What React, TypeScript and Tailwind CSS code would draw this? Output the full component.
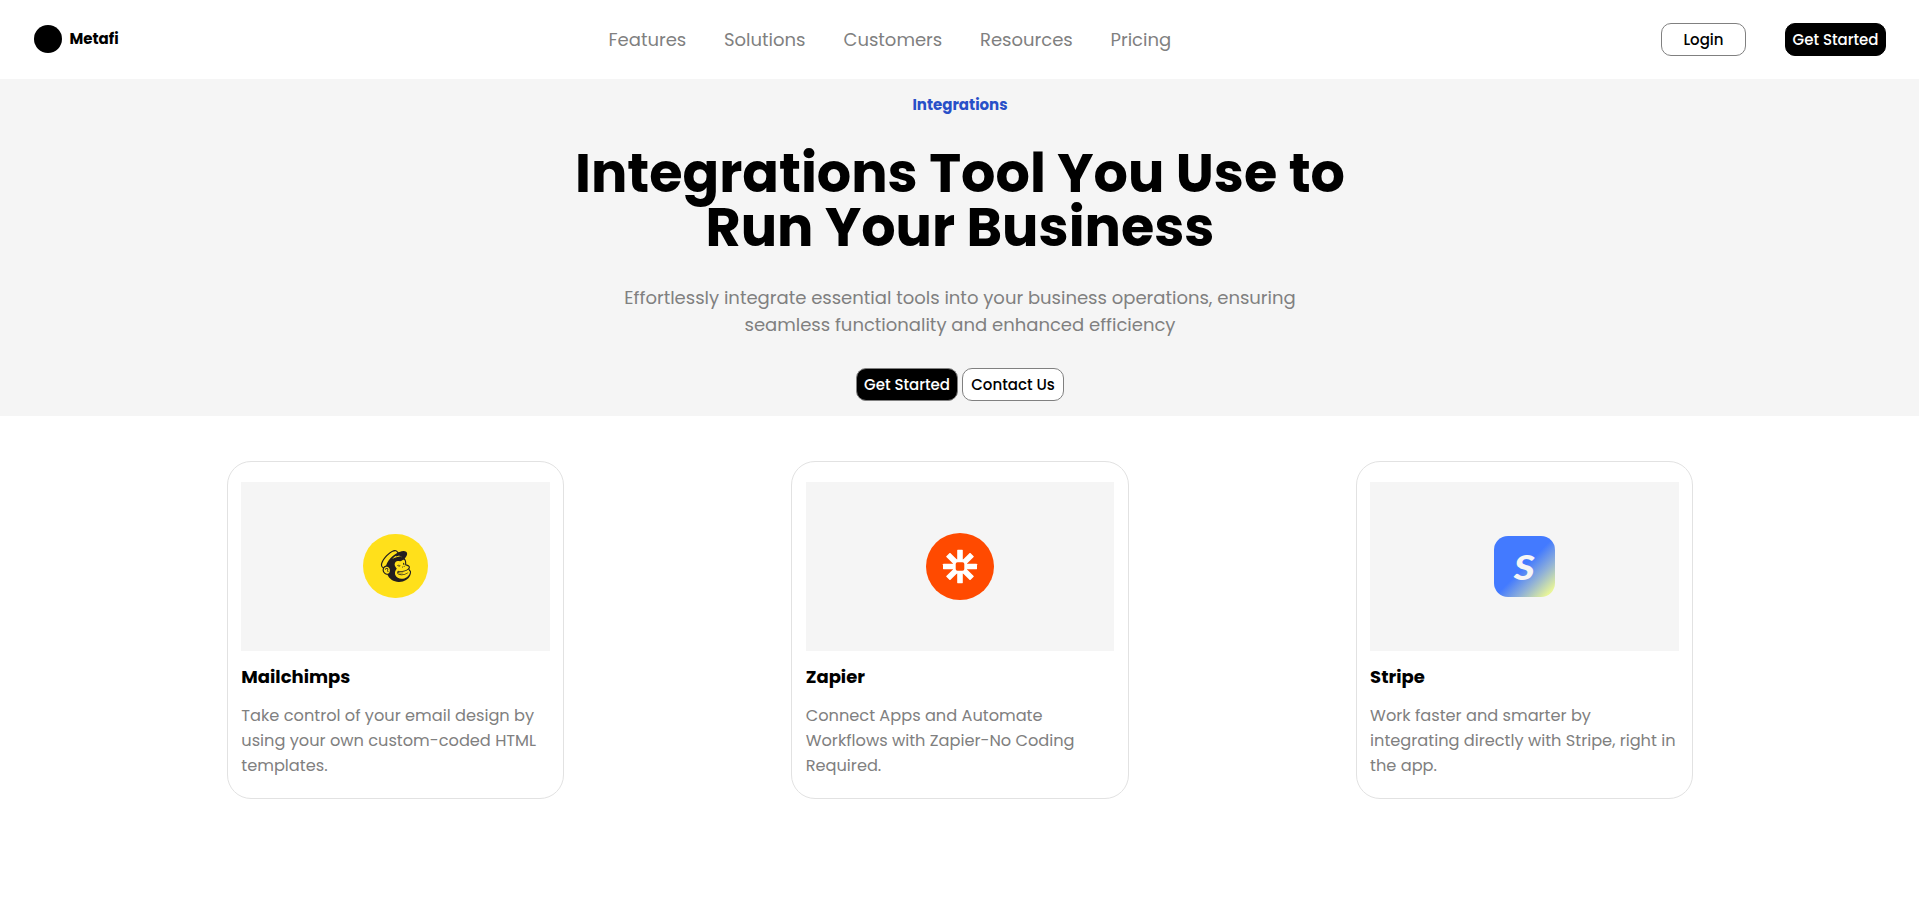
import type { ReactNode } from "react";
import { SiMailchimp } from "react-icons/si";

const navLinks = [
  { text: "Features", className: "w-[115.5px]" },
  { text: "Solutions", className: "w-[119.5px]" },
  { text: "Customers", className: "w-[136.5px]" },
  { text: "Resources", className: "w-[130.5px]" },
  { text: "Pricing", className: "w-[62px]" },
];

function MailchimpLogo() {
  return (
    <div className="mb-px flex h-16 w-[65px] items-center justify-center rounded-full bg-[#ffe01b]">
      <SiMailchimp className="size-8 text-[#231f20]" />
    </div>
  );
}

function ZapierLogo() {
  return (
    <svg viewBox="-34 -34 68 68" preserveAspectRatio="none" className="h-[67px] w-[68px]" aria-hidden="true">
      <circle r="34" fill="#ff4a00" />
      <g fill="#fff">
        {[0, 45, 90, 135].map((angle) => (
          <rect key={angle} x="-17" y="-2.8" width="34" height="5.6" rx="0.5" transform={`rotate(${angle})`} />
        ))}
        <rect x="-7" y="-7" width="14" height="14" rx="3.5" />
      </g>
      <rect x="-4.3" y="-4.3" width="8.6" height="8.6" rx="1.8" fill="#ff4a00" />
    </svg>
  );
}

function StripeLogo() {
  return (
    <div className="flex size-[61px] items-center justify-center rounded-[14px] bg-[linear-gradient(135deg,#437aff_0%,#437aff_50%,#8fb0d8_70%,#e8f598_92%,#effc94_100%)]">
      <span className="scale-x-115 font-[Lato,sans-serif] text-[35px] leading-none font-black text-[#f5f5f5] italic">
        S
      </span>
    </div>
  );
}

const cards: { title: string; lines: string[]; logo: ReactNode }[] = [
  {
    title: "Mailchimps",
    lines: ["Take control of your email design by", "using your own custom-coded HTML", "templates."],
    logo: <MailchimpLogo />,
  },
  {
    title: "Zapier",
    lines: ["Connect Apps and Automate", "Workflows with Zapier-No Coding", "Required."],
    logo: <ZapierLogo />,
  },
  {
    title: "Stripe",
    lines: ["Work faster and smarter by", "integrating directly with Stripe, right in", "the app."],
    logo: <StripeLogo />,
  },
];

function Button({ children, className }: { children: ReactNode; className: string }) {
  return (
    <button
      type="button"
      className={`flex h-[33px] items-center justify-center rounded-[10px] border pt-px text-[15px] font-medium whitespace-nowrap ${className}`}
    >
      {children}
    </button>
  );
}

export default function App() {
  return (
    <div className="min-h-screen bg-white font-[Poppins,Inter,sans-serif] text-black">
      <header className="flex h-[79px] items-center pr-[33px] pl-[34px]">
        <div className="mb-px flex w-[574.5px] items-center gap-[7.5px]">
          <span className="size-7 rounded-full bg-black" />
          <span className="text-[15px] leading-[22px] font-bold">Metafi</span>
        </div>
        <nav>
          <ul className="flex text-lg leading-[27px] text-[#808080]">
            {navLinks.map((link) => (
              <li key={link.text} className={link.className}>
                {link.text}
              </li>
            ))}
          </ul>
        </nav>
        <div className="ml-auto flex gap-[39px]">
          <Button className="w-[85px] border-[#808080] bg-white">Login</Button>
          <Button className="w-[101px] border-black bg-black text-white">Get Started</Button>
        </div>
      </header>

      <section className="flex h-[337px] flex-col items-center bg-[#f5f5f5] pt-3.5 pl-px text-center">
        <p className="text-[15px] leading-[23px] font-bold text-[#2850c8]">Integrations</p>
        <h1 className="mt-[30px] text-[54px] leading-[54px] font-bold whitespace-nowrap">
          Integrations Tool You Use to
          <br />
          Run Your Business
        </h1>
        <p className="mt-[30px] text-lg leading-[27px] whitespace-nowrap text-[#808080]">
          Effortlessly integrate essential tools into your business operations, ensuring
          <br />
          seamless functionality and enhanced efficiency
        </p>
        <div className="mt-[30px] flex gap-1">
          <Button className="w-[102px] border-[#808080] bg-black text-white">Get Started</Button>
          <Button className="w-[102px] border-[#808080] bg-white">Contact Us</Button>
        </div>
      </section>

      <main className="flex gap-[227px] pt-[45px] pl-[227px]">
        {cards.map((card) => (
          <article
            key={card.title}
            className="h-[338px] w-[337.4px] shrink-0 rounded-[24px] border border-[#e2e2e2] pt-5 pr-[13.5px] pl-[13.3px]"
          >
            <div className="flex h-[169px] items-center justify-center bg-[#f5f5f5]">{card.logo}</div>
            <h2 className="mt-3 text-lg leading-[27px] font-bold">{card.title}</h2>
            <p className="mt-[13px] text-[16.2px] leading-[25px] whitespace-nowrap text-[#808080]">
              {card.lines.map((line) => (
                <span key={line} className="block">
                  {line}
                </span>
              ))}
            </p>
          </article>
        ))}
      </main>
    </div>
  );
}
